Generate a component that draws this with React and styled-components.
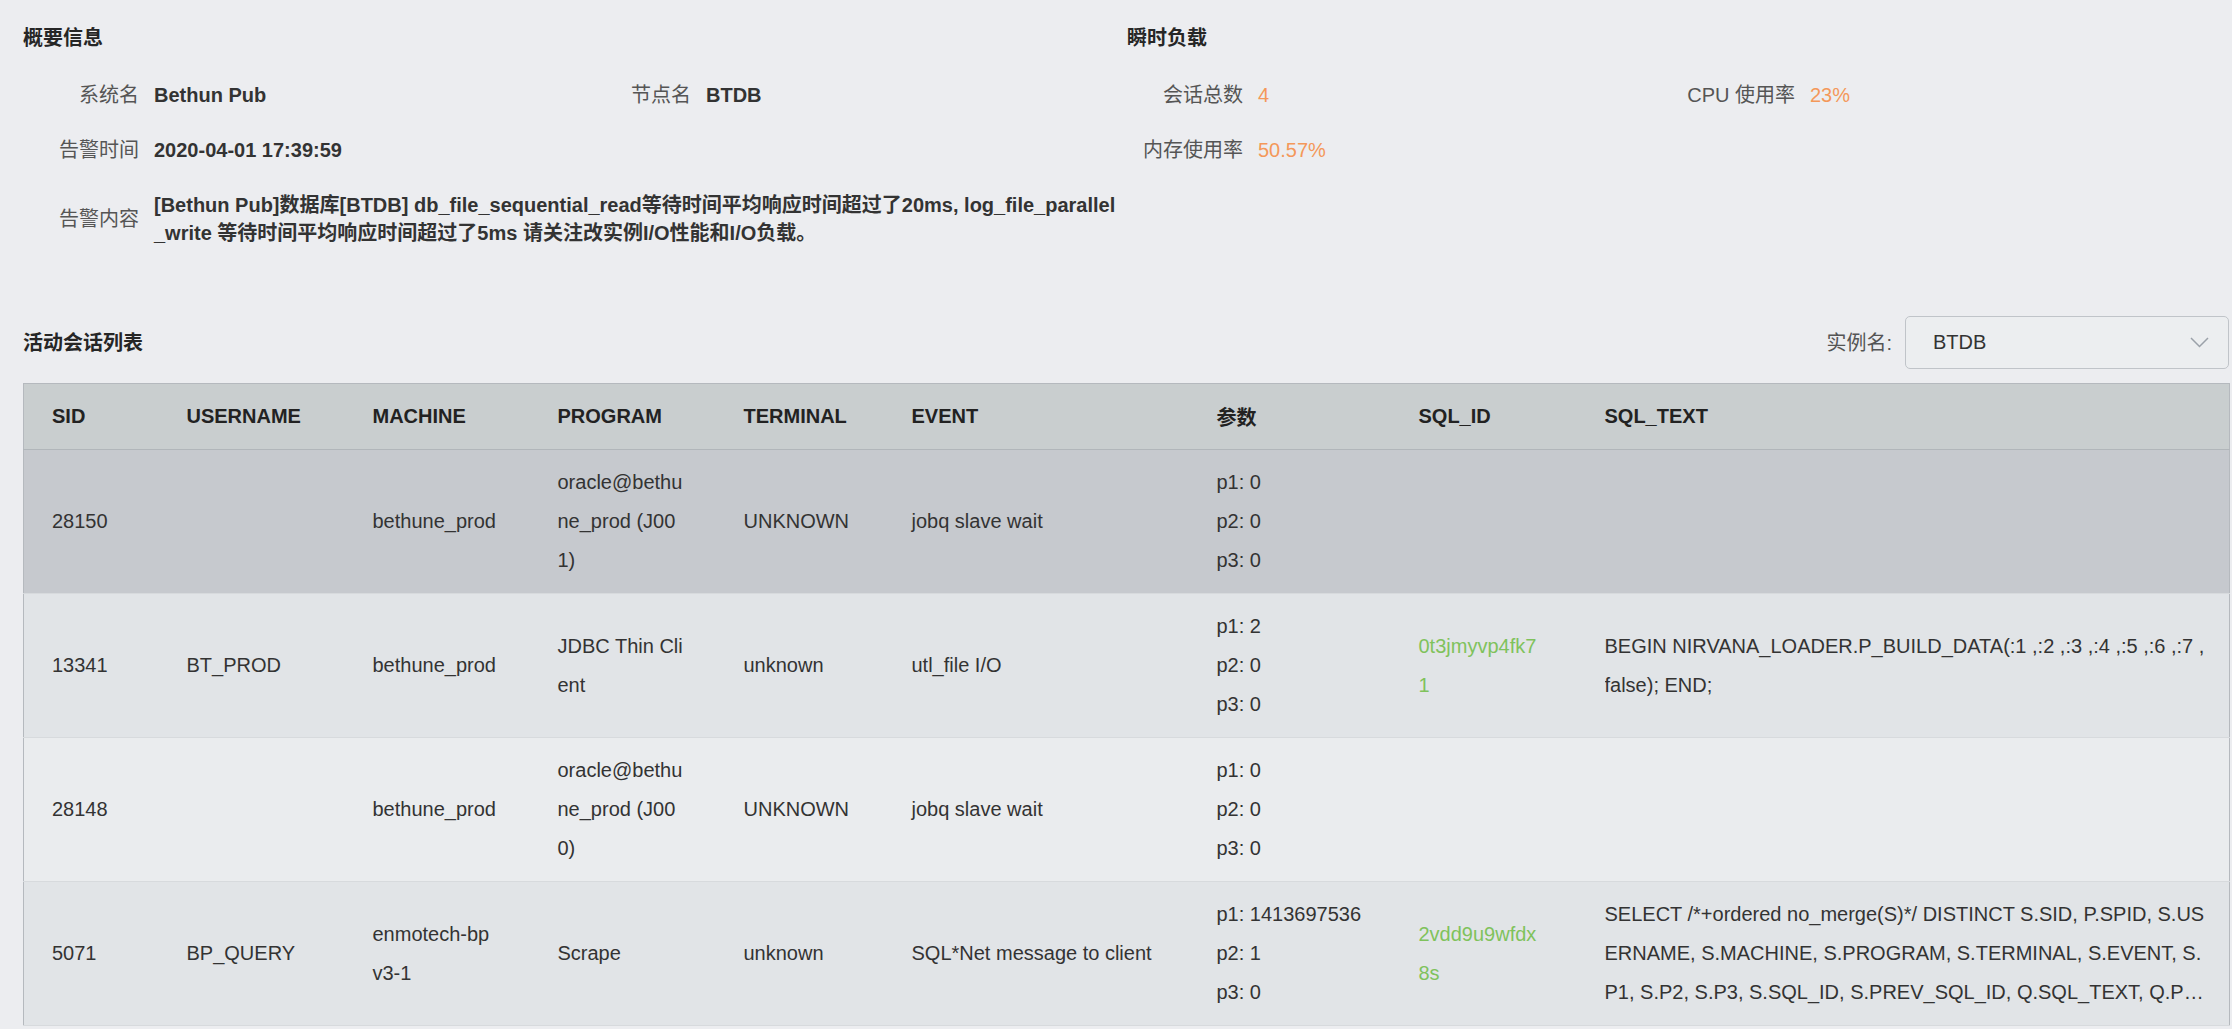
import React from 'react';
import styled, { createGlobalStyle } from 'styled-components';

const GlobalStyle = createGlobalStyle`
  html, body {
    margin: 0;
    padding: 0;
    background: #ecedf0;
  }
  body {
    font-family: "Liberation Sans", "Noto Sans CJK SC", Arial, sans-serif;
    color: #333;
  }
  * { box-sizing: border-box; }
`;

const Page = styled.div`
  padding: 24px 3px 0 23px;
  min-height: 1029px;
`;

const Summary = styled.section`
  display: grid;
  grid-template-columns: 1104px 1fr;
`;

const Half = styled.div`
  display: flex;
  flex-direction: column;
`;

const SectionTitle = styled.h3`
  margin: 0;
  font-size: 20px;
  line-height: 28px;
  font-weight: 700;
  color: #262626;
`;

const FieldGrid = styled.div`
  display: grid;
  grid-template-columns: 552px 552px;
  row-gap: 27px;
  margin-top: 29px;
`;

const Field = styled.div`
  display: flex;
  align-items: center;
  grid-column: ${p => (p.$wide ? '1 / -1' : 'auto')};
`;

const Label = styled.span`
  flex: 0 0 116px;
  margin-right: 15px;
  text-align: right;
  font-size: 20px;
  line-height: 28px;
  color: #555;
  white-space: nowrap;
`;

const Value = styled.span`
  font-size: 20px;
  line-height: 28px;
  font-weight: ${p => (p.$bold ? 700 : 400)};
  color: ${p => (p.$accent ? '#f4985a' : '#333')};
  word-break: break-all;
  max-width: ${p => (p.$wide ? '966px' : 'none')};
`;

const Sessions = styled.section`
  margin-top: 69px;
`;

const SessionsBar = styled.div`
  display: flex;
  align-items: center;
  justify-content: space-between;
  height: 53px;
`;

const Filter = styled.div`
  display: flex;
  align-items: center;
`;

const FilterLabel = styled.span`
  font-size: 20px;
  line-height: 28px;
  color: #555;
  margin-right: 13px;
`;

const Select = styled.div`
  width: 324px;
  height: 53px;
  border: 1px solid #c0c4c9;
  border-radius: 5px;
  padding: 0 19px 0 27px;
  display: flex;
  align-items: center;
  justify-content: space-between;
  font-size: 20px;
  color: #333;
  background: #eceef0;
`;

const Table = styled.table`
  margin-top: 14px;
  width: 100%;
  table-layout: fixed;
  border-collapse: collapse;
  border: 1px solid #b5b9be;
`;

const Th = styled.th`
  height: 66px;
  padding: 0 32px 0 28px;
  text-align: left;
  font-size: 20px;
  font-weight: 700;
  color: #222;
  background: #c9cecf;
  border-bottom: 1px solid #b1b6ba;
  white-space: nowrap;
`;

const Tr = styled.tr`
  background: ${p => p.$bg};
`;

const Td = styled.td`
  padding: 13px ${p => (p.$wideText ? '18px' : '32px')} 13px 28px;
  font-size: 20px;
  line-height: 39px;
  color: #333;
  vertical-align: middle;
  word-break: break-all;
  border-bottom: 1px solid #d7dadd;
`;

const ParamLine = styled.div`
  white-space: nowrap;
`;

const SqlId = styled.span`
  color: #7fc25c;
`;

const SqlText = styled.div`
  display: -webkit-box;
  -webkit-line-clamp: 3;
  -webkit-box-orient: vertical;
  overflow: hidden;
`;

const Chevron = () => (
  <svg width="19" height="11" viewBox="0 0 19 11" fill="none">
    <polyline points="1,1 9.5,9.5 18,1" stroke="#9ba1a9" strokeWidth="1.5" fill="none" />
  </svg>
);

const columns = [
  { key: 'sid', title: 'SID', width: 135 },
  { key: 'user', title: 'USERNAME', width: 186 },
  { key: 'machine', title: 'MACHINE', width: 185 },
  { key: 'program', title: 'PROGRAM', width: 186 },
  { key: 'terminal', title: 'TERMINAL', width: 168 },
  { key: 'event', title: 'EVENT', width: 305 },
  { key: 'params', title: '参数', width: 202 },
  { key: 'sqlId', title: 'SQL_ID', width: 186 },
  { key: 'sqlText', title: 'SQL_TEXT', width: 653 },
];

const rows = [
  {
    bg: '#c6c9ce',
    sid: '28150', user: '', machine: 'bethune_prod', program: 'oracle@bethune_prod (J001)',
    terminal: 'UNKNOWN', event: 'jobq slave wait', params: ['p1: 0', 'p2: 0', 'p3: 0'],
    sqlId: '', sqlText: '',
  },
  {
    bg: '#e1e4e7',
    sid: '13341', user: 'BT_PROD', machine: 'bethune_prod', program: 'JDBC Thin Client',
    terminal: 'unknown', event: 'utl_file I/O', params: ['p1: 2', 'p2: 0', 'p3: 0'],
    sqlId: '0t3jmyvp4fk71',
    sqlText: 'BEGIN NIRVANA_LOADER.P_BUILD_DATA(:1 ,:2 ,:3 ,:4 ,:5 ,:6 ,:7 , false); END;',
  },
  {
    bg: '#eaecee',
    sid: '28148', user: '', machine: 'bethune_prod', program: 'oracle@bethune_prod (J000)',
    terminal: 'UNKNOWN', event: 'jobq slave wait', params: ['p1: 0', 'p2: 0', 'p3: 0'],
    sqlId: '', sqlText: '',
  },
  {
    bg: '#e1e4e7',
    sid: '5071', user: 'BP_QUERY', machine: 'enmotech-bpv3-1', program: 'Scrape',
    terminal: 'unknown', event: 'SQL*Net message to client', params: ['p1: 1413697536', 'p2: 1', 'p3: 0'],
    sqlId: '2vdd9u9wfdx8s',
    sqlText: 'SELECT /*+ordered no_merge(S)*/ DISTINCT S.SID, P.SPID, S.USERNAME, S.MACHINE, S.PROGRAM, S.TERMINAL, S.EVENT, S.P1, S.P2, S.P3, S.SQL_ID, S.PREV_SQL_ID, Q.SQL_TEXT, Q.PLAN_HASH_VALUE, S.LOGON_TIME FROM V$SESSION S, V$PROCESS P, V$SQL Q',
  },
];

export default function App() {
  return (
    <>
      <GlobalStyle />
      <Page>
        <Summary>
          <Half>
            <SectionTitle>概要信息</SectionTitle>
            <FieldGrid>
              <Field>
                <Label>系统名</Label>
                <Value $bold>Bethun Pub</Value>
              </Field>
              <Field>
                <Label>节点名</Label>
                <Value $bold>BTDB</Value>
              </Field>
              <Field $wide>
                <Label>告警时间</Label>
                <Value $bold>2020-04-01 17:39:59</Value>
              </Field>
              <Field $wide>
                <Label>告警内容</Label>
                <Value $bold $wide>
                  [Bethun Pub]数据库[BTDB] db_file_sequential_read等待时间平均响应时间超过了20ms, log_file_parallel_write 等待时间平均响应时间超过了5ms 请关注改实例I/O性能和I/O负载。
                </Value>
              </Field>
            </FieldGrid>
          </Half>
          <Half>
            <SectionTitle>瞬时负载</SectionTitle>
            <FieldGrid>
              <Field>
                <Label>会话总数</Label>
                <Value $accent>4</Value>
              </Field>
              <Field>
                <Label>CPU 使用率</Label>
                <Value $accent>23%</Value>
              </Field>
              <Field $wide>
                <Label>内存使用率</Label>
                <Value $accent>50.57%</Value>
              </Field>
            </FieldGrid>
          </Half>
        </Summary>

        <Sessions>
          <SessionsBar>
            <SectionTitle>活动会话列表</SectionTitle>
            <Filter>
              <FilterLabel>实例名:</FilterLabel>
              <Select>
                <span>BTDB</span>
                <Chevron />
              </Select>
            </Filter>
          </SessionsBar>

          <Table>
            <colgroup>
              {columns.map(c => (
                <col key={c.key} style={{ width: c.width }} />
              ))}
            </colgroup>
            <thead>
              <tr>
                {columns.map(c => (
                  <Th key={c.key}>{c.title}</Th>
                ))}
              </tr>
            </thead>
            <tbody>
              {rows.map(r => (
                <Tr key={r.sid} $bg={r.bg}>
                  <Td>{r.sid}</Td>
                  <Td>{r.user}</Td>
                  <Td>{r.machine}</Td>
                  <Td>{r.program}</Td>
                  <Td>{r.terminal}</Td>
                  <Td>{r.event}</Td>
                  <Td>
                    {r.params.map(p => (
                      <ParamLine key={p}>{p}</ParamLine>
                    ))}
                  </Td>
                  <Td>
                    <SqlId>{r.sqlId}</SqlId>
                  </Td>
                  <Td $wideText>
                    <SqlText>{r.sqlText}</SqlText>
                  </Td>
                </Tr>
              ))}
            </tbody>
          </Table>
        </Sessions>
      </Page>
    </>
  );
}
